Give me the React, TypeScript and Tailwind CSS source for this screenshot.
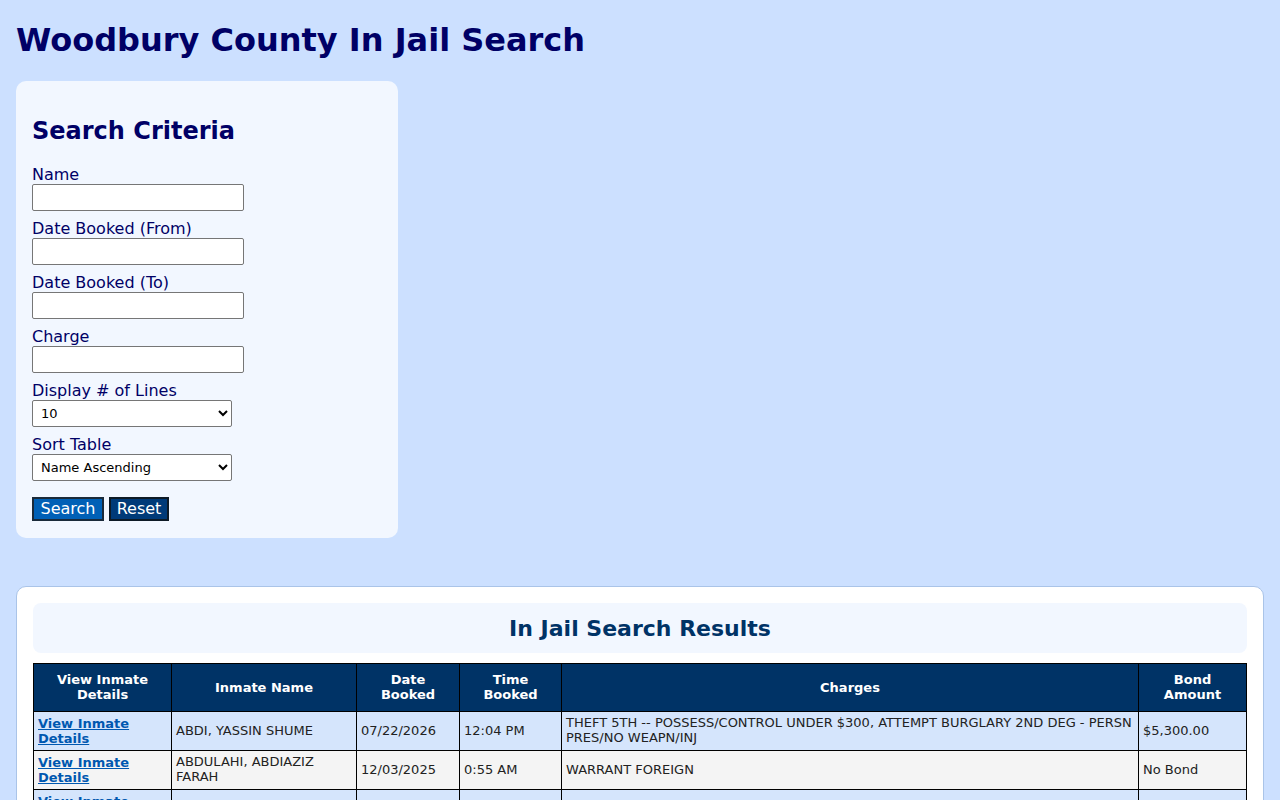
const rows = [
  {
    name: "ABDI, YASSIN SHUME",
    date: "07/22/2026",
    time: "12:04 PM",
    charges: "THEFT 5TH -- POSSESS/CONTROL UNDER $300, ATTEMPT BURGLARY 2ND DEG - PERSN PRES/NO WEAPN/INJ",
    bond: "$5,300.00",
  },
  {
    name: "ABDULAHI, ABDIAZIZ FARAH",
    date: "12/03/2025",
    time: "0:55 AM",
    charges: "WARRANT FOREIGN",
    bond: "No Bond",
  },
  {
    name: "",
    date: "",
    time: "",
    charges: "",
    bond: "",
  },
];

const fields = ["Name", "Date Booked (From)", "Date Booked (To)", "Charge"];

export default function App() {
  return (
    <div className="min-h-screen bg-[#cce0ff] p-4 pt-0 font-['DejaVu_Sans',sans-serif] text-[#000066]">
      <h1 className="pt-[21px] pb-[22px] text-[32px] leading-[38px] font-bold text-[#000066]">
        Woodbury County In Jail Search
      </h1>

      <div className="w-[382px] rounded-[10px] bg-[#f2f7ff] px-4 pt-[35px] pb-[17px]">
        <h2 className="mb-[19px] text-[24px] leading-[30px] font-bold text-[#000066]">Search Criteria</h2>
        {fields.map((f) => (
          <div key={f} className="mb-[8px]">
            <label className="block text-[16px] leading-[19px]">{f}</label>
            <input
              type="text"
              className="block h-[27px] w-[212px] rounded-[2px] border border-[#767676] bg-white"
            />
          </div>
        ))}
        <div className="mb-[8px]">
          <label className="block text-[16px] leading-[19px]">Display # of Lines</label>
          <select className="block h-[27px] w-[200px] rounded-[2px] border border-[#767676] bg-white pl-[4px] text-[13px] text-black">
            <option>10</option>
          </select>
        </div>
        <div>
          <label className="block text-[16px] leading-[19px]">Sort Table</label>
          <select className="block h-[27px] w-[200px] rounded-[2px] border border-[#767676] bg-white pl-[4px] text-[13px] text-black">
            <option>Name Ascending</option>
          </select>
        </div>
        <div className="mt-[16px] flex gap-[5px]">
          <button className="h-[24px] w-[72px] border-2 border-[#1a2a3a] bg-[#0060b6] text-[16px] leading-[18px] text-white">
            Search
          </button>
          <button className="h-[24px] w-[60px] border-2 border-[#0d1a26] bg-[#003a78] text-[16px] leading-[18px] text-white">
            Reset
          </button>
        </div>
      </div>

      <div className="mt-[48px] rounded-[10px] border border-[#aac4e8] bg-white px-4 pt-4 pb-6">
        <div className="flex h-[50px] items-center justify-center rounded-[8px] bg-[#f2f7ff]">
          <h2 className="text-[22px] font-bold text-[#003366]">In Jail Search Results</h2>
        </div>
        <table className="mt-[10px] w-full table-fixed border-collapse text-[13px] leading-[15px] text-[#222]">
          <colgroup>
            <col className="w-[138px]" />
            <col className="w-[185px]" />
            <col className="w-[103px]" />
            <col className="w-[102px]" />
            <col />
            <col className="w-[108px]" />
          </colgroup>
          <thead>
            <tr className="h-[48px] bg-[#003366] text-white">
              <th className="border border-black px-[10px] pb-[1px] font-bold">View Inmate Details</th>
              <th className="border border-black px-[10px] pb-[1px] font-bold">Inmate Name</th>
              <th className="border border-black px-[10px] pb-[1px] font-bold">Date Booked</th>
              <th className="border border-black px-[10px] pb-[1px] font-bold">Time Booked</th>
              <th className="border border-black px-[10px] pb-[1px] font-bold">Charges</th>
              <th className="border border-black px-[16px] pb-[1px] font-bold">Bond Amount</th>
            </tr>
          </thead>
          <tbody>
            {rows.map((r, i) => (
              <tr key={i} className={`h-[39px] ${i % 2 === 0 ? "bg-[#d5e5fc]" : "bg-[#f4f4f4]"}`}>
                <td className="border border-black px-[4px] py-[4px]">
                  <a href="#" className="font-bold text-[#0058b0] underline">
                    View Inmate Details
                  </a>
                </td>
                <td className="border border-black px-[4px] pt-[3px] pb-[5px]">{r.name}</td>
                <td className="border border-black px-[4px] pt-[3px] pb-[5px]">{r.date}</td>
                <td className="border border-black px-[4px] pt-[3px] pb-[5px]">{r.time}</td>
                <td className="border border-black px-[4px] pt-[3px] pb-[5px]">{r.charges}</td>
                <td className="border border-black px-[4px] pt-[3px] pb-[5px]">{r.bond}</td>
              </tr>
            ))}
          </tbody>
        </table>
      </div>
    </div>
  );
}
